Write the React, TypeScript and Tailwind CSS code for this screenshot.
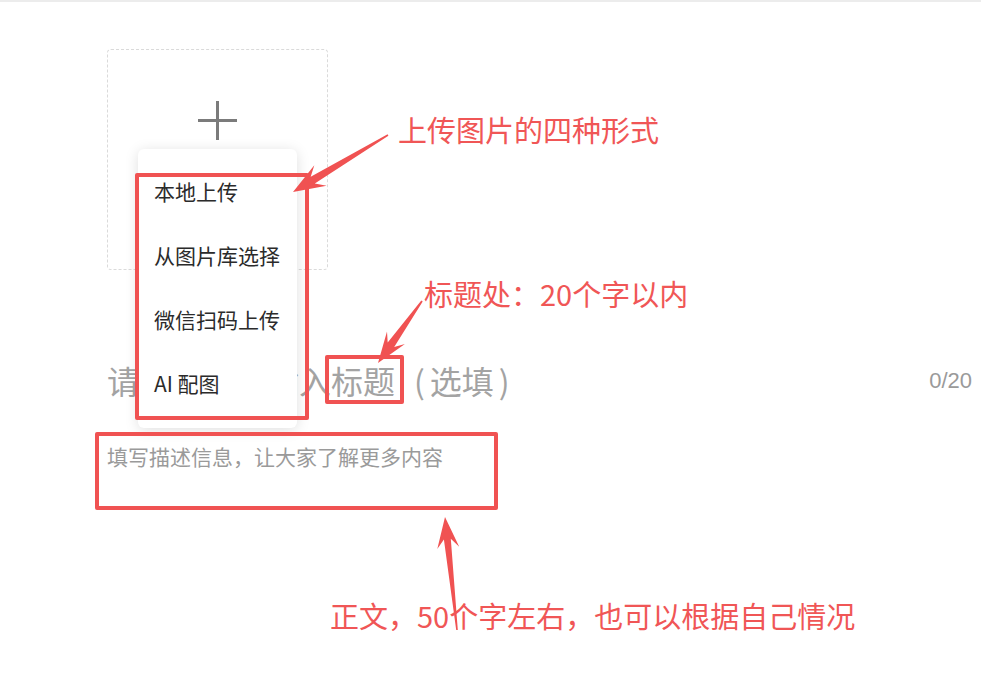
import React from "react";

type Pt = [number, number];

// tapered screenshot-style arrow, thin at the tail and wide near the head
const arrowPoints = (tail: Pt, tip: Pt, headLen = 30, headW = 22, neckW = 8): string => {
  const dx = tip[0] - tail[0];
  const dy = tip[1] - tail[1];
  const len = Math.hypot(dx, dy);
  const ux = dx / len;
  const uy = dy / len;
  const nx = -uy;
  const ny = ux;
  const neck: Pt = [tip[0] - ux * headLen * 0.72, tip[1] - uy * headLen * 0.72];
  const wing: Pt = [tip[0] - ux * headLen, tip[1] - uy * headLen];
  const pts: Pt[] = [
    [tail[0] + nx * 0.8, tail[1] + ny * 0.8],
    [neck[0] + (nx * neckW) / 2, neck[1] + (ny * neckW) / 2],
    [wing[0] + (nx * headW) / 2, wing[1] + (ny * headW) / 2],
    tip,
    [wing[0] - (nx * headW) / 2, wing[1] - (ny * headW) / 2],
    [neck[0] - (nx * neckW) / 2, neck[1] - (ny * neckW) / 2],
    [tail[0] - nx * 0.8, tail[1] - ny * 0.8],
  ];
  return pts.map((p) => `${p[0].toFixed(1)},${p[1].toFixed(1)}`).join(" ");
};

const menuItems = ["本地上传", "从图片库选择", "微信扫码上传", "AI 配图"];

const App = () => {
  return (
    <div className="relative w-[981px] h-[676px] overflow-hidden bg-white border-t-2 border-[#ececec] font-['Noto_Sans_CJK_SC','Microsoft_YaHei',sans-serif]">
      <div className="pl-[107px] pr-[9px] pt-[47px]">
        {/* upload box */}
        <div className="w-[221px] h-[221px] border border-dashed border-[#dadada] rounded-[4px] flex justify-center pt-[51px]">
          <div className="relative w-[39px] h-[39px]">
            <div className="absolute left-0 top-[18px] w-[39px] h-[3px] bg-[#7b7b7b]" />
            <div className="absolute top-0 left-[18px] w-[3px] h-[39px] bg-[#7b7b7b]" />
          </div>
        </div>

        {/* title */}
        <div className="mt-[86px] flex items-center justify-between h-[48px]">
          <div className="text-[32px] leading-[48px] text-[#a3a3a3] whitespace-nowrap flex">
            <span>请为本笔记输入标题</span>
            <span className="ml-[19px]">(</span>
            <span className="px-[5px]">选填</span>
            <span>)</span>
          </div>
          <div className="text-[22px] text-[#9a9a9a] font-['Liberation_Sans',sans-serif]">0/20</div>
        </div>

        {/* description */}
        <div className="mt-[37px] text-[21px] leading-[30px] text-[#9a9a9a] whitespace-nowrap">
          填写描述信息，让大家了解更多内容
        </div>
      </div>

      {/* dropdown menu */}
      <div className="absolute left-[138px] top-[147px] w-[159px] bg-white rounded-[6px] shadow-[0_2px_14px_rgba(0,0,0,0.13)] pt-[11px] pb-[12px]">
        {menuItems.map((item, index) => (
          <div
            key={index}
            className="h-[64px] flex items-center pl-[16px] text-[21px] text-[#2b2b2b] whitespace-nowrap"
          >
            {item}
          </div>
        ))}
      </div>

      {/* annotation boxes */}
      <div className="absolute left-[135px] top-[171px] w-[174px] h-[247px] border-4 border-[#f05252] rounded-[2px]" />
      <div className="absolute left-[325px] top-[353px] w-[79px] h-[49px] border-4 border-[#f05252] rounded-[2px]" />
      <div className="absolute left-[95px] top-[430px] w-[403px] h-[78px] border-4 border-[#f05252] rounded-[2px]" />

      {/* annotation arrows */}
      <svg className="absolute left-0 top-0 pointer-events-none" width="981" height="676">
        <polygon points={arrowPoints([388, 133], [293, 190], 32, 24, 8)} fill="#f05252" />
        <polygon points={arrowPoints([422, 299], [378, 361], 31, 22, 8)} fill="#f05252" />
        <polygon points={arrowPoints([457, 628], [445, 515], 31, 22, 7)} fill="#f05252" />
      </svg>

      {/* annotation labels */}
      <div className="absolute left-[398px] top-[111px] text-[29px] leading-[32px] text-[#f05656] whitespace-nowrap">
        上传图片的四种形式
      </div>
      <div className="absolute left-[424px] top-[275px] text-[29px] leading-[32px] text-[#f05656] whitespace-nowrap">
        标题处：20个字以内
      </div>
      <div className="absolute left-[330px] top-[597px] text-[29px] leading-[32px] text-[#f05656] whitespace-nowrap">
        正文，50个字左右，也可以根据自己情况
      </div>
    </div>
  );
};

export default App;
